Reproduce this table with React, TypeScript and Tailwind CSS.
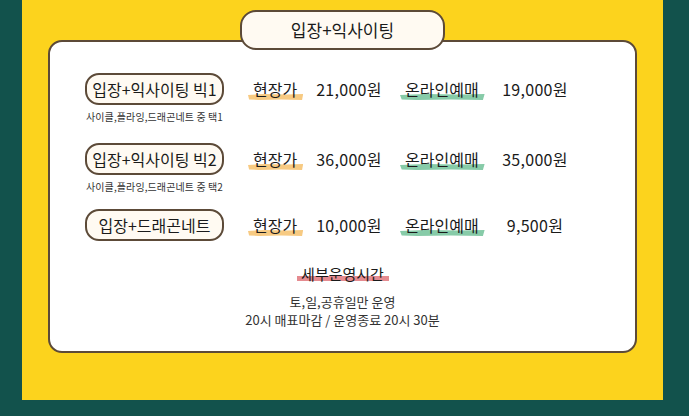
import React from "react";

const font = { fontFamily: '"Noto Sans CJK KR", "Noto Sans", sans-serif' };

function Mark({ children, color }: { children: React.ReactNode; color: string }) {
  return (
    <span className="relative inline-block">
      <span className={`absolute left-[-5px] right-[-6px] bottom-[1px] h-[6px] ${color}`} style={{ clipPath: "polygon(0 15%, 30% 0, 70% 10%, 100% 0, 98% 100%, 60% 90%, 20% 100%, 2% 90%)" }} />
      <span className="relative">{children}</span>
    </span>
  );
}

function Row({
  title,
  caption,
  onsite,
  online,
  className,
}: {
  title: string;
  caption?: string;
  onsite: string;
  online: string;
  className: string;
}) {
  return (
    <div className={`flex items-start pl-[35px] ${className}`}>
      <div className="flex w-[139px] flex-col items-center">
        <div className="flex h-[32px] w-[139px] items-center justify-center rounded-[14px] border-2 border-[#5c4a38] bg-[#fffaf2] text-[16px] tracking-[0px] text-[#1a1a1a]">
          {title}
        </div>
        {caption && (
          <div className="mt-[6px] text-[10px] leading-[12px] tracking-[0.1px] text-[#333]">{caption}</div>
        )}
      </div>
      <div className="flex h-[32px] items-center text-[16px] text-[#1a1a1a]">
        <div className="ml-[29px] w-[56px]">
          <Mark color="bg-[#f7ca82]">현장가</Mark>
        </div>
        <div className="w-[80px] text-center tracking-[0.3px]">{onsite}</div>
        <div className="ml-[16px] w-[90px]">
          <Mark color="bg-[#87cba8]">온라인예매</Mark>
        </div>
        <div className="w-[80px] text-center tracking-[0.3px]">{online}</div>
      </div>
    </div>
  );
}

export default function App() {
  return (
    <div className="h-[416px] w-[689px] bg-[#12524c] px-[22px]" style={font}>
      <div className="relative h-[400px] w-[641px] bg-[#fcd31d] px-[26px] pt-[40px]">
        <div className="absolute left-[218px] top-[10px] z-10 flex h-[40px] w-[205px] items-center justify-center rounded-[16px] border-2 border-[#5c4a38] bg-[#fffaf2] text-[17px] text-[#1a1a1a]">
          입장+익사이팅
        </div>
        <div className="flex h-[313px] flex-col rounded-[14px] border-2 border-[#5c4a38] bg-white">
          <Row className="mt-[31px]" title="입장+익사이팅 빅1" caption="사이클,플라잉,드래곤네트 중 택1" onsite="21,000원" online="19,000원" />
          <Row className="mt-[20px]" title="입장+익사이팅 빅2" caption="사이클,플라잉,드래곤네트 중 택2" onsite="36,000원" online="35,000원" />
          <Row className="mt-[16px]" title="입장+드래곤네트" onsite="10,000원" online="9,500원" />
          <div className="mt-[23px] flex flex-col items-center text-[#1a1a1a]">
            <div className="text-[15px] leading-[20px]">
              <span className="relative inline-block">
                <span className="absolute left-[-4px] right-[-5px] bottom-[3px] h-[5px] bg-[#e58b90]" />
                <span className="relative">세부운영시간</span>
              </span>
            </div>
            <div className="mt-[9px] text-[13px] leading-[18px] text-[#333] text-center">
              <div>토,일,공휴일만 운영</div>
              <div>20시 매표마감 / 운영종료 20시 30분</div>
            </div>
          </div>
        </div>
      </div>
    </div>
  );
}
